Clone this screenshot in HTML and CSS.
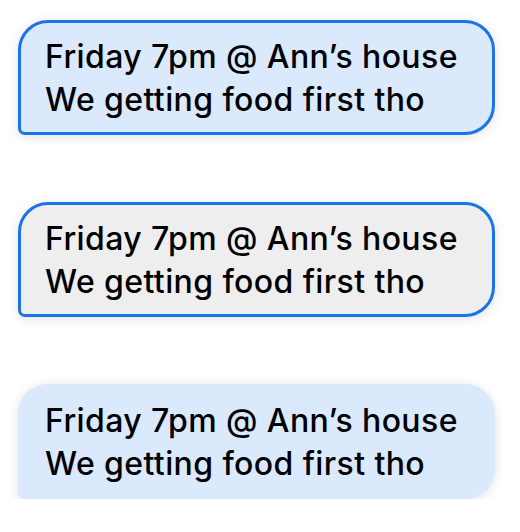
FILE: index.html
```html
<!DOCTYPE html>
<html>
<head>
<meta charset="utf-8">
<link rel="stylesheet" href="styles.css">
</head>
<body>
<div class="stack">
  <div class="bubble bubble--selected">
    <p class="line">Friday 7pm @ Ann’s house</p>
    <p class="line">We getting food first tho</p>
  </div>
  <div class="bubble bubble--grey">
    <p class="line">Friday 7pm @ Ann’s house</p>
    <p class="line">We getting food first tho</p>
  </div>
  <div class="bubble bubble--plain">
    <p class="line">Friday 7pm @ Ann’s house</p>
    <p class="line">We getting food first tho</p>
  </div>
</div>
</body>
</html>
```

FILE: styles.css
```css
html, body {
  margin: 0;
  padding: 0;
  background: #ffffff;
}

.stack {
  display: flex;
  flex-direction: column;
  gap: 67px;
  padding: 20px 0 0 18px;
}

.bubble {
  box-sizing: border-box;
  width: 477px;
  height: 115px;
  border-radius: 30px 30px 30px 7px;
  box-shadow: 0 2px 12px rgba(0, 0, 0, 0.12);
  font-family: Inter, "Liberation Sans", Arial, sans-serif;
  font-size: 32px;
  font-weight: 500;
  line-height: 43px;
  letter-spacing: 0.4px;
  color: #000;
}

.bubble--selected {
  background: #dbe9fd;
  border: 3px solid #1a73e8;
  padding: 12px 0 0 24px;
}

.bubble--grey {
  background: #eeeeee;
  border: 3px solid #1a73e8;
  padding: 12px 0 0 24px;
}

.bubble--plain {
  background: #dbe9fd;
  padding: 15px 0 0 27px;
}

.line {
  margin: 0;
  white-space: nowrap;
}
```
